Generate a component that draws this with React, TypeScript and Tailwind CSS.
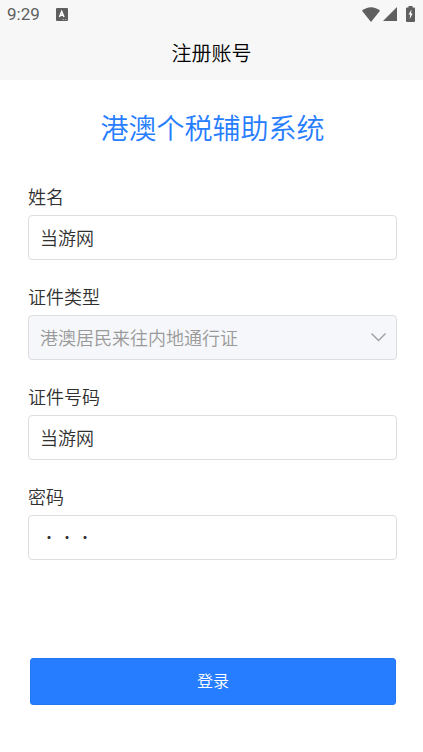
import { useState, type ReactNode } from "react";

const box = "block h-[45px] w-full rounded border border-[#dddddd] px-[11px] text-lg outline-none";
const field = `${box} pb-0.5 font-[350] text-[#303030]`;

function StatusBar() {
  return (
    <div className="flex h-7 items-center justify-between pr-2 pl-[7px] text-[#5f5f5f]">
      <div className="flex items-center gap-4">
        <span className="font-[Roboto,sans-serif] text-[17px] leading-7">9:29</span>
        <svg width="12" height="13" viewBox="0 0 12 13" aria-hidden="true">
          <rect width="12" height="13" rx="1" fill="currentColor" />
          <path d="M3.500 9 5.700 3.500 8 9M4.200 7.300h3" fill="none" stroke="#fff" strokeWidth="1.500" />
          <path d="M6.500 11.500h1.500M9 11.500h1.500" stroke="#aaa" />
        </svg>
      </div>
      <div className="flex items-center">
        <svg width="18" height="15" viewBox="0 0 18 15" fill="currentColor" aria-hidden="true">
          <path d="M0 3.700C5 -1 13 -1 18 3.700L9 15Z" />
        </svg>
        <svg className="ml-[3px]" width="14" height="14" viewBox="0 0 14 14" fill="currentColor" aria-hidden="true">
          <path d="M14 0V14H0Z" />
        </svg>
        <svg className="ml-[9px]" width="9" height="16" viewBox="0 0 9 16" aria-hidden="true">
          <path d="M2.500 0h4v1.500H8q1 0 1 1V15q0 1-1 1H1q-1 0-1-1V2.500q0-1 1-1h1.500Z" fill="currentColor" />
          <path d="M5.500 3.500 2.500 8.500h1.700L3.700 13 6.700 7.500H5Z" fill="#fff" />
        </svg>
      </div>
    </div>
  );
}

function Field({ id, label, children }: { id: string; label: string; children: ReactNode }) {
  return (
    <div>
      <label htmlFor={id} className="block pb-1.5 text-lg leading-[26px] font-[350] text-[#303030]">
        {label}
      </label>
      {children}
    </div>
  );
}

export default function App() {
  const [name, setName] = useState("当游网");
  const [number, setNumber] = useState("当游网");
  const [password, setPassword] = useState("abc");

  return (
    <div className="min-h-screen bg-white font-['Noto_Sans_CJK_SC',sans-serif]">
      <header className="bg-[#f7f7f7]">
        <StatusBar />
        <h1 className="h-[52px] text-center text-xl leading-[50px] font-[350] text-black">注册账号</h1>
      </header>
      <main className="pr-[26px] pb-12 pl-7">
        <h2 className="pt-6 text-center text-[28px] leading-[46px] font-[350] text-[#267dff]">港澳个税辅助系统</h2>
        <form onSubmit={(e) => e.preventDefault()}>
          <div className="flex flex-col gap-[23px] pt-[33px]">
            <Field id="name" label="姓名">
              <input id="name" className={field} value={name} onChange={(e) => setName(e.target.value)} />
            </Field>
            <Field id="type" label="证件类型">
              <div className="relative">
                <select
                  id="type"
                  disabled
                  className={`${box} appearance-none bg-[#f5f7fa] pb-0.5 font-[350] text-[#999999] opacity-100`}
                >
                  <option>港澳居民来往内地通行证</option>
                </select>
                <svg
                  className="pointer-events-none absolute top-[17px] right-[10px]"
                  width="17"
                  height="11"
                  viewBox="0 0 17 11"
                  fill="none"
                  stroke="#a3a3a3"
                  strokeWidth="1.500"
                  aria-hidden="true"
                >
                  <path d="M1.500 1.500 8.500 8.500 15.500 1.500" />
                </svg>
              </div>
            </Field>
            <Field id="number" label="证件号码">
              <input id="number" className={field} value={number} onChange={(e) => setNumber(e.target.value)} />
            </Field>
            <Field id="password" label="密码">
              <input
                id="password"
                type="password"
                className={`${box} pb-1 font-thin text-[#303030]`}
                value={password}
                onChange={(e) => setPassword(e.target.value)}
              />
            </Field>
          </div>
          <div className="pt-[98px] pr-px pl-0.5">
            <button type="submit" className="h-[47px] w-full rounded-[3px] border border-[#2277f5] bg-[#267dff] pb-1 text-base font-[350] text-white">
              登录
            </button>
          </div>
        </form>
      </main>
    </div>
  );
}
